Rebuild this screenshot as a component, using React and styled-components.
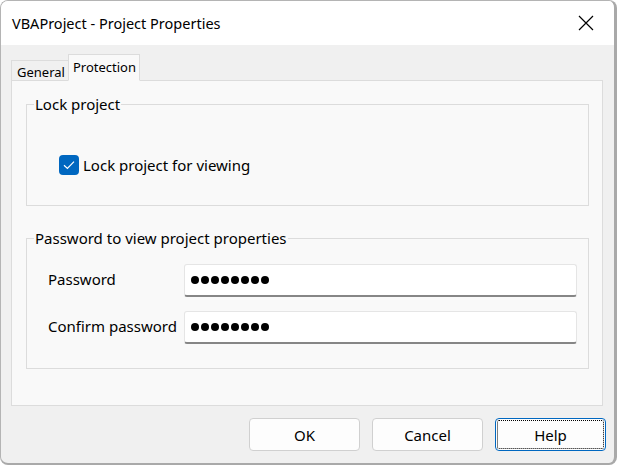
import React from 'react'
import styled, { createGlobalStyle } from 'styled-components'

const Global = createGlobalStyle`
    html, body {
        margin: 0;
        padding: 0;
        background: #ffffff;
    }
    body {
        font-family: "Noto Sans", "Open Sans", sans-serif;
        color: #000;
    }
`

const Window = styled.div`
    box-sizing: border-box;
    width: 617px;
    height: 465px;
    border: 1px solid #b4b4b4;
    border-right: 3px solid #a9a9a9;
    border-bottom: 2px solid #a9a9a9;
    border-radius: 8px;
    overflow: hidden;
    background: #f0f0f0;
    display: flex;
    flex-direction: column;
`

const TitleBar = styled.div`
    height: 44px;
    background: #ffffff;
    display: flex;
    align-items: center;
    justify-content: space-between;
    padding: 0 20px 0 11px;
    font-size: 14.5px;
`

const Body = styled.div`
    flex: 1;
    padding: 9px 11px 0 10px;
    display: flex;
    flex-direction: column;
`

const Tabs = styled.div`
    display: flex;
    align-items: flex-end;
    height: 27px;
    margin-bottom: -1px;
    position: relative;
    z-index: 1;
`

const Tab = styled.div`
    box-sizing: border-box;
    height: ${p => (p.active ? '27px' : '21px')};
    padding: ${p => (p.active ? '1px 3px 0 4px' : '2px 3px 0 5px')};
    font-size: 13px;
    line-height: ${p => (p.active ? '22px' : '19px')};
    background: ${p => (p.active ? '#f9f9f9' : '#f0f0f0')};
    border: 1px solid #dcdcdc;
    border-bottom: ${p => (p.active ? '1px solid #f9f9f9' : '1px solid #dcdcdc')};
    border-right: ${p => (p.active ? '1px solid #dcdcdc' : 'none')};
`

const Panel = styled.div`
    box-sizing: border-box;
    height: 326px;
    background: #f9f9f9;
    border: 1px solid #dcdcdc;
    padding: 13px 13px 0 14px;
    display: flex;
    flex-direction: column;
    gap: 22px;
`

const Group = styled.fieldset`
    margin: 0;
    height: ${p => p.h}px;
    box-sizing: border-box;
    border: 1px solid #dcdcdc;
    padding: 0 11px 0 21px;
    display: flex;
    flex-direction: column;
`

const Legend = styled.legend`
    font-size: 15px;
    padding: 0 1px;
    margin-left: -14px;
    line-height: 20px;
`

const CheckRow = styled.label`
    display: flex;
    align-items: center;
    gap: 4px;
    margin-top: 41px;
    margin-left: 11px;
    font-size: 15px;
`

const Box = styled.span`
    width: 20px;
    height: 20px;
    border-radius: 4px;
    background: #0067c0;
    display: flex;
    align-items: center;
    justify-content: center;
`

const Field = styled.div`
    display: grid;
    grid-template-columns: 136px 1fr;
    align-items: center;
    margin-top: ${p => p.top}px;
    font-size: 15px;
`

const Label = styled.span`
    margin-top: -4px;
`

const Input = styled.div`
    box-sizing: border-box;
    height: 33px;
    background: #ffffff;
    border: 1px solid #e5e5e5;
    border-bottom: 2px solid #868686;
    border-radius: 3px;
    display: flex;
    align-items: center;
    padding-left: 6px;
    gap: 2px;
`

const Dot = styled.span`
    width: 8px;
    height: 8px;
    border-radius: 50%;
    background: #000;
`

const Footer = styled.div`
    display: flex;
    justify-content: flex-end;
    gap: 12px;
    padding: 12px 0 0 0;
    margin-right: -3px;
`

const Button = styled.button`
    width: 111px;
    height: 33px;
    box-sizing: border-box;
    font-family: "Noto Sans", "Open Sans", sans-serif;
    font-size: 15px;
    color: #000;
    background: #fdfdfd;
    border: 1px solid ${p => (p.focus ? '#0067c0' : '#d0d0d0')};
    border-radius: 4px;
    outline: ${p => (p.focus ? '1px dotted #000' : 'none')};
    outline-offset: -3px;
    padding: 0;
`

function Dots() {
    return (
        <Input>
            {Array.from({ length: 8 }).map((_, i) => <Dot key={i} />)}
        </Input>
    )
}

export default function App() {
    return (
        <>
            <Global />
            <Window>
                <TitleBar>
                    <span>VBAProject - Project Properties</span>
                    <svg width="16" height="16" viewBox="0 0 16 16">
                        <path d="M1 1 L15 15 M15 1 L1 15" stroke="#000" strokeWidth="1.2" fill="none" />
                    </svg>
                </TitleBar>
                <Body>
                    <Tabs>
                        <Tab>General</Tab>
                        <Tab active>Protection</Tab>
                    </Tabs>
                    <Panel>
                        <Group h={112}>
                            <Legend>Lock project</Legend>
                            <CheckRow>
                                <Box>
                                    <svg width="12" height="10" viewBox="0 0 12 10">
                                        <path d="M1 5.2 L4.4 8.4 L11 1.6" stroke="#fff" strokeWidth="1.2" fill="none" />
                                    </svg>
                                </Box>
                                Lock project for viewing
                            </CheckRow>
                        </Group>
                        <Group h={141}>
                            <Legend>Password to view project properties</Legend>
                            <Field top={16}>
                                <Label>Password</Label>
                                <Dots />
                            </Field>
                            <Field top={14}>
                                <Label>Confirm password</Label>
                                <Dots />
                            </Field>
                        </Group>
                    </Panel>
                    <Footer>
                        <Button>OK</Button>
                        <Button>Cancel</Button>
                        <Button focus>Help</Button>
                    </Footer>
                </Body>
            </Window>
        </>
    )
}
